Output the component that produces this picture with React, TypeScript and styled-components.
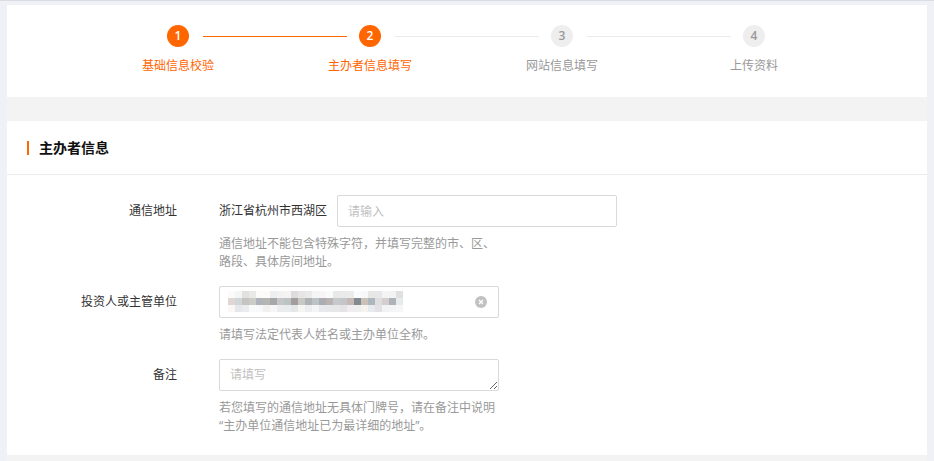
import React from "react";
import styled, { createGlobalStyle } from "styled-components";

const orange = "#ff6600";

const GlobalStyle = createGlobalStyle`
  *, *::before, *::after { box-sizing: border-box; }
  body {
    margin: 0;
    background: #f0f1f7;
    color: #333;
    font: 12px/18px "Open Sans", "Noto Sans CJK SC", sans-serif;
  }
  h2, p, ol { margin: 0; padding: 0; }
`;

const Page = styled.div`
  min-height: 100vh;
  padding: 4px 7px 0;
  border-top: 1px solid #dcdce3;
  display: flex;
`;

const Content = styled.main`
  flex: 1;
  display: flex;
  flex-direction: column;
  gap: 24px;
  padding-bottom: 6px;
  background: #f3f3f3;
`;

const Panel = styled.section`
  background: #fff;
`;

const Steps = styled.ol`
  display: grid;
  grid-template-columns: repeat(4, 1fr);
  padding: 20px 77px 22px 75px;
  list-style: none;
`;

const Step = styled.li<{ $active: boolean }>`
  color: ${(p) => (p.$active ? orange : "#999")};
  text-align: center;
`;

const StepTrack = styled.div`
  display: grid;
  grid-template-columns: 1fr 22px 1fr;
  align-items: center;
  margin-bottom: 10px;
`;

type LineState = "none" | "done" | "todo";
const lineColor = { none: "transparent", done: orange, todo: "#ebebeb" };

const Line = styled.span<{ $state: LineState; $after?: boolean }>`
  height: 1px;
  margin: ${(p) => (p.$after ? "0 0 0 14px" : "0 12px 0 0")};
  background: ${(p) => lineColor[p.$state]};
`;

const StepNumber = styled.span<{ $active: boolean }>`
  height: 22px;
  border-radius: 50%;
  background: ${(p) => (p.$active ? orange : "#eee")};
  color: ${(p) => (p.$active ? "#fff" : "#999")};
  font-weight: 600;
  line-height: 22px;
`;

const PanelHeader = styled.header`
  display: flex;
  align-items: center;
  gap: 10px;
  height: 54px;
  padding: 0 20px;
  border-bottom: 1px solid #ebebeb;
`;

const Marker = styled.span`
  width: 2px;
  height: 14px;
  background: ${orange};
`;

const Title = styled.h2`
  color: #111;
  font-size: 14px;
  font-weight: 700;
  line-height: 20px;
`;

const Form = styled.form`
  display: grid;
  gap: 15px;
  padding: 20px 0;
`;

const Row = styled.div`
  display: grid;
  grid-template-columns: 170px 1fr;
  column-gap: 42px;
`;

const Label = styled.label`
  line-height: 32px;
  text-align: right;
`;

const Control = styled.div`
  display: flex;
  align-items: center;
  gap: 10px;
  margin-bottom: 8px;
`;

const Field = styled.div`
  position: relative;
  display: flex;
  width: 280px;
`;

const TextInput = styled.input`
  width: 100%;
  height: 32px;
  padding: 0 10px;
  border: 1px solid #d9d9d9;
  border-radius: 2px;
  background: #fff;
  color: #333;
  font: inherit;
  &::placeholder { color: #bfbfbf; }
`;

const TextArea = styled.textarea`
  width: 100%;
  height: 32px;
  padding: 6px 10px;
  border: 1px solid #d9d9d9;
  border-radius: 2px;
  background: #fff;
  color: #333;
  font: inherit;
  resize: both;
  overflow: hidden;
  &::placeholder { color: #bfbfbf; }
`;

const MaskedValue = styled.svg`
  position: absolute;
  left: 9px;
  top: 5px;
  pointer-events: none;
`;

const ClearButton = styled.button`
  position: absolute;
  right: 12px;
  top: 10px;
  display: flex;
  padding: 0;
  border: 0;
  background: none;
  cursor: pointer;
`;

const Help = styled.p`
  width: 280px;
  color: #999;
`;

const steps = ["基础信息校验", "主办者信息填写", "网站信息填写", "上传资料"];
const current = 1;

const mosaic = [
  "fdfbfa f3f6f6 e1e1df e9e9e8 fdfbfa fcfbfa eceef0 f3f1f2 f6f4f3 dedddd e7e6e5 ebeaeb f4f5f6 f8f5f4 f8fafb e8e8e6 e9eaeb ecebea f8fcff f8f8f8 e7e7e4 e5e7e9 f5f4f2 f3f3f3 e0e0e0",
  "e1d6d3 cfd7d7 c6c3c1 cbccc8 b0b3bc b6b6b2 a5a7a8 c5c7c7 bcc3c5 a39d9d c8c9c4 b0b3b6 bbc3c4 acacb3 bab2b3 c6c9ca c5c4c8 c4b9b4 838a8f cac2b9 adb6bd dededf d4cece afb3b9 e6ebec",
  "faf7f5 e6e7ea e9ebee f8faf9 f8f9f9 f1f0ef f6f6f8 ebeded e9ebec e6e7e9 f5f6f2 eceff0 f4f6f6 e8e9ed e7e8ea e7e6e9 e6e3e7 f0edf0 eeedf0 f7f3f1 e7eaee e3e1e4 f1f3f5 f5f4f4 f4f6f8",
].map((row) => row.split(" "));

function lineState(index: number): LineState {
  if (index < 0 || index >= steps.length - 1) return "none";
  return index < current ? "done" : "todo";
}

export default function App() {
  return (
    <>
      <GlobalStyle />
      <Page>
        <Content>
          <Panel>
            <Steps>
              {steps.map((name, i) => (
                <Step key={name} $active={i <= current}>
                  <StepTrack>
                    <Line $state={lineState(i - 1)} />
                    <StepNumber $active={i <= current}>{i + 1}</StepNumber>
                    <Line $state={lineState(i)} $after />
                  </StepTrack>
                  {name}
                </Step>
              ))}
            </Steps>
          </Panel>
          <Panel>
            <PanelHeader>
              <Marker />
              <Title>主办者信息</Title>
            </PanelHeader>
            <Form>
              <Row>
                <Label htmlFor="address">通信地址</Label>
                <div>
                  <Control>
                    <span>浙江省杭州市西湖区</span>
                    <Field>
                      <TextInput id="address" placeholder="请输入" />
                    </Field>
                  </Control>
                  <Help>通信地址不能包含特殊字符，并填写完整的市、区、路段、具体房间地址。</Help>
                </div>
              </Row>
              <Row>
                <Label htmlFor="investor">投资人或主管单位</Label>
                <div>
                  <Control>
                    <Field>
                      <TextInput id="investor" />
                      <MaskedValue width="175" height="21" shapeRendering="crispEdges" aria-hidden="true">
                        {mosaic.map((row, y) =>
                          row.map((fill, x) => (
                            <rect key={`${x}-${y}`} x={x * 7} y={y * 7} width="7" height="7" fill={`#${fill}`} />
                          ))
                        )}
                      </MaskedValue>
                      <ClearButton type="button" aria-label="清除">
                        <svg width="12" height="12" viewBox="0 0 12 12">
                          <circle cx="6" cy="6" r="6" fill="#c1c1c1" />
                          <path d="M4 4l4 4M8 4l-4 4" stroke="#fff" strokeWidth="1.3" />
                        </svg>
                      </ClearButton>
                    </Field>
                  </Control>
                  <Help>请填写法定代表人姓名或主办单位全称。</Help>
                </div>
              </Row>
              <Row>
                <Label htmlFor="remark">备注</Label>
                <div>
                  <Control>
                    <Field>
                      <TextArea id="remark" placeholder="请填写" />
                    </Field>
                  </Control>
                  <Help>
                    若您填写的通信地址无具体门牌号，请在备注中说明
                    <br />
                    “主办单位通信地址已为最详细的地址”。
                  </Help>
                </div>
              </Row>
            </Form>
          </Panel>
        </Content>
      </Page>
    </>
  );
}
